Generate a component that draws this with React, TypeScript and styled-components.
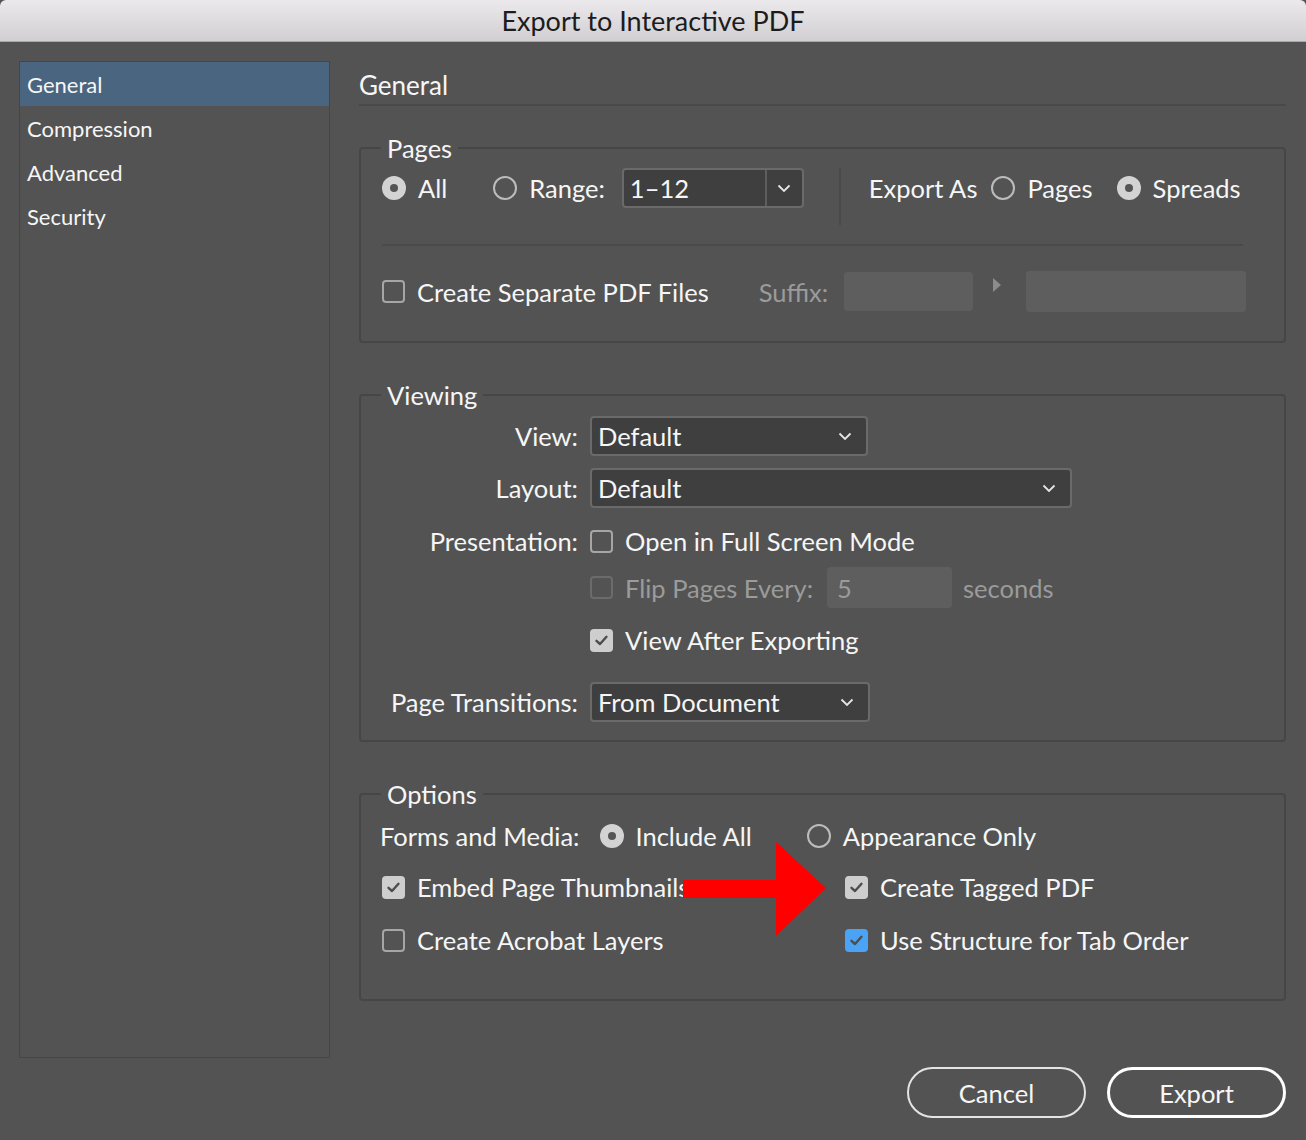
import React from 'react';
import styled, { createGlobalStyle } from 'styled-components';

const FONT = `Lato, "Open Sans", "Noto Sans", sans-serif`;

const GlobalStyle = createGlobalStyle`
    body {
        margin: 0;
        background: #535353;
        font-family: ${FONT};
    }
`;

const Window = styled.div`
    position: relative;
    width: 1306px;
    height: 1140px;
    background: #535353;
    overflow: hidden;
    color: #f6f6f6;
`;

const TitleBar = styled.div`
    height: 42px;
    box-sizing: border-box;
    display: flex;
    align-items: center;
    justify-content: center;
    background: linear-gradient(#ebe9eb, #d1cfd1);
    border-bottom: 1px solid #a9a7a9;
    border-radius: 6px 6px 0 0;
    color: #1c1c1c;
    font-size: 27px;
`;

const Body = styled.div`
    display: flex;
    padding: 19px 20px 0 19px;
`;

const Sidebar = styled.ul`
    width: 311px;
    height: 997px;
    box-sizing: border-box;
    margin: 0;
    padding: 0;
    list-style: none;
    border: 1px solid #464646;
`;

const NavItem = styled.li<{ $active?: boolean }>`
    height: 44px;
    display: flex;
    align-items: center;
    padding-left: 7px;
    font-size: 22px;
    background: ${p => (p.$active ? '#4a6580' : 'transparent')};
`;

const Main = styled.div`
    margin-left: 29px;
    width: 927px;
    display: flex;
    flex-direction: column;
`;

const Heading = styled.div`
    height: 45px;
    display: flex;
    align-items: center;
    padding-top: 5px;
    box-sizing: border-box;
    font-size: 26px;
    border-bottom: 2px solid #494949;
`;

const Group = styled.fieldset<{ $top: number }>`
    margin: ${p => p.$top}px 0 0;
    padding: 0;
    border: 2px solid #464646;
    border-radius: 4px;
    min-width: 0;
`;

const Legend = styled.legend`
    margin-left: 20px;
    padding: 0 6px;
    font-size: 25.5px;
    line-height: 30px;
`;

const Row = styled.div<{ $pad?: number; $top?: number; $h?: number }>`
    display: flex;
    align-items: center;
    padding-left: ${p => p.$pad ?? 21}px;
    margin-top: ${p => p.$top ?? 0}px;
    height: ${p => p.$h ?? 40}px;
`;

const Text = styled.span<{ $muted?: boolean; $gap?: number }>`
    font-size: 25.5px;
    white-space: nowrap;
    margin-left: ${p => p.$gap ?? 0}px;
    color: ${p => (p.$muted ? '#9b9b9b' : '#f6f6f6')};
`;

const Radio = styled.span<{ $checked?: boolean; $gap?: number }>`
    width: 24px;
    height: 24px;
    box-sizing: border-box;
    border-radius: 50%;
    flex: none;
    margin-left: ${p => p.$gap ?? 0}px;
    margin-right: 12px;
    display: flex;
    align-items: center;
    justify-content: center;
    border: ${p => (p.$checked ? 'none' : '2px solid #bcbcbc')};
    background: ${p => (p.$checked ? '#d3d3d3' : 'transparent')};
    &::after {
        content: '';
        display: ${p => (p.$checked ? 'block' : 'none')};
        width: 8px;
        height: 8px;
        border-radius: 50%;
        background: #555;
    }
`;

type BoxKind = 'off' | 'on' | 'blue' | 'disabled';

const BOX_BG: Record<BoxKind, string> = {
    off: 'transparent',
    disabled: 'transparent',
    on: '#cecece',
    blue: '#4aa3f4',
};

const BOX_BORDER: Record<BoxKind, string> = {
    off: '2px solid #a6a6a6',
    disabled: '2px solid #6b6b6b',
    on: 'none',
    blue: 'none',
};

const Box = styled.span<{ $kind: BoxKind }>`
    width: 23px;
    height: 23px;
    box-sizing: border-box;
    flex: none;
    border-radius: 4px;
    margin-right: 12px;
    display: flex;
    align-items: center;
    justify-content: center;
    background: ${p => BOX_BG[p.$kind]};
    border: ${p => BOX_BORDER[p.$kind]};
`;

const Check: React.FC<{ kind: BoxKind }> = ({ kind }) => (
    <Box $kind={kind}>
        {(kind === 'on' || kind === 'blue') && (
            <svg width="15" height="15" viewBox="0 0 15 15">
                <path d="M2.5 7.8 L6 11 L12.5 3.8" fill="none" stroke="#4d4d4d" strokeWidth="2.4" strokeLinecap="round" strokeLinejoin="round" />
            </svg>
        )}
    </Box>
);

const Chevron = () => (
    <svg width="14" height="9" viewBox="0 0 14 9">
        <path d="M1.5 1.5 L7 7 L12.5 1.5" fill="none" stroke="#e6e6e6" strokeWidth="1.8" />
    </svg>
);

const SelectBox = styled.div<{ $w: number }>`
    width: ${p => p.$w}px;
    height: 40px;
    box-sizing: border-box;
    display: flex;
    align-items: center;
    justify-content: space-between;
    padding: 0 14px 0 6px;
    background: #3f3f3f;
    border: 2px solid #6a6a6a;
    border-radius: 4px;
    font-size: 25.5px;
    flex: none;
`;

const Combo = styled.div`
    width: 182px;
    height: 40px;
    box-sizing: border-box;
    display: flex;
    background: #3f3f3f;
    border: 2px solid #6a6a6a;
    border-radius: 4px;
    margin-left: 17px;
    font-size: 25.5px;
`;

const ComboField = styled.div`
    flex: 1;
    display: flex;
    align-items: center;
    padding-left: 6px;
    border-right: 2px solid #5e5e5e;
`;

const ComboButton = styled.div`
    width: 35px;
    display: flex;
    align-items: center;
    justify-content: center;
`;

const VRule = styled.div`
    width: 2px;
    height: 57px;
    margin-left: 35px;
    background: #4a4a4a;
`;

const HRule = styled.div`
    height: 2px;
    margin: 19px 41px 0 21px;
    background: #4a4a4a;
`;

const Field = styled.div<{ $w: number; $h?: number; $gap?: number }>`
    width: ${p => p.$w}px;
    height: ${p => p.$h ?? 40}px;
    margin-left: ${p => p.$gap ?? 0}px;
    box-sizing: border-box;
    background: #5e5e5e;
    border-radius: 4px;
    display: flex;
    align-items: center;
    padding-left: 10px;
    font-size: 25.5px;
    color: #9b9b9b;
    flex: none;
`;

const Arrowhead = styled.span`
    width: 0;
    height: 0;
    margin-left: 20px;
    margin-top: -14px;
    border-top: 7px solid transparent;
    border-bottom: 7px solid transparent;
    border-left: 8px solid #8c8c8c;
`;

const FormGrid = styled.div`
    display: grid;
    grid-template-columns: 198px 1fr;
    grid-template-rows: 52px 53px 46px 53px 62px 40px;
    column-gap: 12px;
    padding: 6px 0 18px 19px;
`;

const GridLabel = styled.div`
    justify-self: end;
    height: 40px;
    display: flex;
    align-items: center;
    font-size: 25.5px;
    white-space: nowrap;
`;

const GridCell = styled.div<{ $h?: number }>`
    height: ${p => p.$h ?? 40}px;
    display: flex;
    align-items: center;
`;

const OptionGrid = styled.div`
    display: grid;
    grid-template-columns: 463px 1fr;
    grid-template-rows: 40px 40px;
    row-gap: 13px;
    padding: 11px 0 39px 21px;
`;

const Footer = styled.div`
    display: flex;
    justify-content: flex-end;
    gap: 21px;
    margin-top: 66px;
`;

const PillButton = styled.button<{ $primary?: boolean }>`
    width: 179px;
    height: 51px;
    box-sizing: border-box;
    border-radius: 26px;
    background: transparent;
    color: #f6f6f6;
    font-family: ${FONT};
    font-size: 25.5px;
    border: ${p => (p.$primary ? '3px solid #ffffff' : '2px solid #e4e4e4')};
`;

const RedArrow = styled.svg`
    position: absolute;
    left: 683px;
    top: 842px;
`;

export default function App() {
    return (
        <Window>
            <GlobalStyle />
            <TitleBar>Export to Interactive PDF</TitleBar>
            <Body>
                <Sidebar>
                    <NavItem $active>General</NavItem>
                    <NavItem>Compression</NavItem>
                    <NavItem>Advanced</NavItem>
                    <NavItem>Security</NavItem>
                </Sidebar>
                <Main>
                    <Heading>General</Heading>

                    <Group $top={27}>
                        <Legend>Pages</Legend>
                        <Row $top={5} $h={57} style={{ alignItems: 'flex-start' }}>
                            <Row $pad={0}>
                                <Radio $checked />
                                <Text>All</Text>
                                <Radio $gap={46} />
                                <Text>Range:</Text>
                                <Combo>
                                    <ComboField>1–12</ComboField>
                                    <ComboButton><Chevron /></ComboButton>
                                </Combo>
                            </Row>
                            <VRule />
                            <Row $pad={28}>
                                <Text>Export As</Text>
                                <Radio $gap={14} />
                                <Text>Pages</Text>
                                <Radio $checked $gap={24} />
                                <Text>Spreads</Text>
                            </Row>
                        </Row>
                        <HRule />
                        <Row $top={25} $h={41}>
                            <Check kind="off" />
                            <Text>Create Separate PDF Files</Text>
                            <Text $muted $gap={50}>Suffix:</Text>
                            <Field $w={129} $h={39} $gap={16} />
                            <Arrowhead />
                            <Field $w={220} $h={41} $gap={25} />
                        </Row>
                        <div style={{ height: 29 }} />
                    </Group>

                    <Group $top={37}>
                        <Legend>Viewing</Legend>
                        <FormGrid>
                            <GridLabel>View:</GridLabel>
                            <GridCell>
                                <SelectBox $w={278}>Default<Chevron /></SelectBox>
                            </GridCell>
                            <GridLabel>Layout:</GridLabel>
                            <GridCell>
                                <SelectBox $w={482}>Default<Chevron /></SelectBox>
                            </GridCell>
                            <GridLabel>Presentation:</GridLabel>
                            <GridCell>
                                <Check kind="off" />
                                <Text>Open in Full Screen Mode</Text>
                            </GridCell>
                            <div />
                            <GridCell $h={41}>
                                <Check kind="disabled" />
                                <Text $muted>Flip Pages Every:</Text>
                                <Field $w={125} $h={41} $gap={14}>5</Field>
                                <Text $muted $gap={11}>seconds</Text>
                            </GridCell>
                            <div />
                            <GridCell>
                                <Check kind="on" />
                                <Text>View After Exporting</Text>
                            </GridCell>
                            <GridLabel>Page Transitions:</GridLabel>
                            <GridCell>
                                <SelectBox $w={280}>From Document<Chevron /></SelectBox>
                            </GridCell>
                        </FormGrid>
                    </Group>

                    <Group $top={37}>
                        <Legend>Options</Legend>
                        <Row $pad={19} $top={7}>
                            <Text>Forms and Media:</Text>
                            <Radio $checked $gap={20} />
                            <Text>Include All</Text>
                            <Radio $gap={55} />
                            <Text>Appearance Only</Text>
                        </Row>
                        <OptionGrid>
                            <GridCell>
                                <Check kind="on" />
                                <Text>Embed Page Thumbnails</Text>
                            </GridCell>
                            <GridCell>
                                <Check kind="on" />
                                <Text>Create Tagged PDF</Text>
                            </GridCell>
                            <GridCell>
                                <Check kind="off" />
                                <Text>Create Acrobat Layers</Text>
                            </GridCell>
                            <GridCell>
                                <Check kind="blue" />
                                <Text>Use Structure for Tab Order</Text>
                            </GridCell>
                        </OptionGrid>
                    </Group>

                    <Footer>
                        <PillButton>Cancel</PillButton>
                        <PillButton $primary>Export</PillButton>
                    </Footer>
                </Main>
            </Body>
            <RedArrow width="144" height="94" viewBox="0 0 144 94">
                <polygon points="0,38 93,38 93,0 143,46 93,94 93,56 0,56" fill="#ff0000" />
            </RedArrow>
        </Window>
    );
}
